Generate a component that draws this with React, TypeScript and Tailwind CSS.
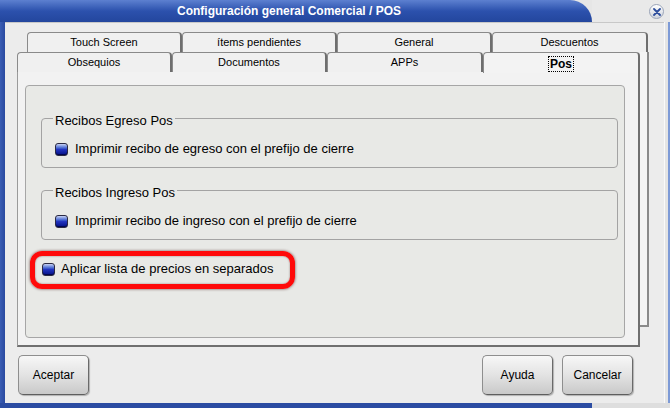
import React from "react";

const font = { fontFamily: '"Liberation Sans", Arial, sans-serif' };

const Check = () => (
  <span className="inline-block shrink-0 w-[13px] h-[13px] rounded-[3px] border border-[#2a2a44] bg-linear-to-b from-[#c9d2f2] via-[#2234c0] to-[#050f86] shadow-[inset_0_-1px_0_rgba(0,0,40,0.6)]" />
);

const Tab = ({ label, className }: { label: React.ReactNode; className: string }) => (
  <div
    className={
      "h-[20px] flex items-center justify-center border-l border-t border-r-2 border-[#8a8a8a] border-r-[#6e6e6e] rounded-t-[4px] text-[11px] text-black " +
      className
    }
  >
    {label}
  </div>
);

const Group = ({ title, label }: { title: string; label: string }) => (
  <div className="relative ml-[11px] w-[577px] h-[50px] border border-[#a3a3a3] rounded-[4px]">
    <span className="absolute left-[11px] -top-[6px] px-[2px] bg-[#e8e9e6] text-[13px] leading-[16px] text-black">
      {title}
    </span>
    <div className="flex items-center gap-[7px] pl-[13px] pt-[22px] text-[13px] leading-[16px] text-black">
      <Check />
      <span>{label}</span>
    </div>
  </div>
);

const Btn = ({ label }: { label: string }) => (
  <button className="w-[71px] h-[40px] rounded-[5px] border border-[#8e8e8e] border-b-[#5e5e5e] border-r-[#6a6a6a] bg-linear-to-b from-[#f7f7f7] via-[#e3e3e3] to-[#c9c9c9] shadow-[1px_1px_1px_rgba(0,0,0,0.25)] text-[12px] text-black">
    {label}
  </button>
);

export default function App() {
  return (
    <div className="w-[670px] h-[408px] flex flex-col overflow-hidden bg-[#e6e6e6]" style={font}>
      {/* title bar */}
      <div className="h-[22px] flex">
        <div className="w-[592px] h-[22px] rounded-tr-[34px] bg-linear-to-b from-[#5d80d0] via-[#2c51ad] to-[#23469d] flex items-center justify-center pr-[14px]">
          <span className="text-white font-bold text-[12px]">Configuración general Comercial / POS</span>
        </div>
        <div className="flex-1 flex items-start justify-end pr-[6px] pt-[4px] bg-[#e9e9e9]">
          <div className="w-[15px] h-[15px] rounded-full border border-[#9aa4b8] bg-linear-to-b from-[#ffffff] to-[#cfd4de] flex items-center justify-center">
            <svg width="8" height="8" viewBox="0 0 8 8">
              <path d="M1 1 L7 7 M7 1 L1 7" stroke="#2c4c9c" strokeWidth="1.8" strokeLinecap="round" />
            </svg>
          </div>
        </div>
      </div>

      <div className="flex h-[381px]">
        <div className="w-[5px] bg-linear-to-r from-[#3a5db4] to-[#2a4aa0]" />
        <div className="w-[659px] bg-[#ececec] border-t border-[#c8c8c8] flex flex-col pl-[12px] pt-[9px]">
          {/* tab control */}
          <div className="flex flex-col">
            <div className="flex ml-[10px]">
              <Tab label="Touch Screen" className="w-[155px] bg-[#f0f0f0]" />
              <Tab label="ítems pendientes" className="w-[155px] bg-[#f0f0f0]" />
              <Tab label="General" className="w-[155px] bg-[#f0f0f0]" />
              <Tab label="Descuentos" className="w-[156px] bg-[#f0f0f0]" />
            </div>
            <div className="flex">
              <div className="flex flex-col w-[623px]">
                <div className="flex">
                  <Tab label="Obsequios" className="w-[155px] bg-[#f0f0f0]" />
                  <Tab label="Documentos" className="w-[155px] bg-[#f0f0f0]" />
                  <Tab label="APPs" className="w-[156px] bg-[#f0f0f0]" />
                  <Tab
                    label={
                      <span className="border border-dotted border-black px-[1px] leading-[14px] font-bold text-[12px]">Pos</span>
                    }
                    className="w-[157px] bg-[#f3f3f3] relative z-10 -mb-px h-[21px] pt-[2px]"
                  />
                </div>
                <div className="w-[623px] h-[275px] border-l border-[#9a9a9a] border-r-2 border-r-[#707070] border-b-2 border-b-[#707070] bg-[#f2f2f2] pl-[7px] pt-[13px]">
                  <div className="w-[600px] h-[253px] border border-[#a6a6a6] rounded-[4px] bg-[#e8e9e6] pl-[4px] pt-[32px] flex flex-col">
                    <Group title="Recibos Egreso Pos" label="Imprimir recibo de egreso con el prefijo de cierre" />
                    <div className="h-[22px]" />
                    <Group title="Recibos Ingreso Pos" label="Imprimir recibo de ingreso con el prefijo de cierre" />
                    <div className="mt-[11px] w-[265px] h-[38px] border-[5px] border-[#ff0a0a] rounded-[12px] shadow-[0_0_3px_rgba(60,0,0,0.7),inset_0_0_2px_rgba(60,0,0,0.5)] flex items-center gap-[6px] pl-[7px] pb-[2px] text-[13px] text-black">
                      <Check />
                      <span>Aplicar lista de precios en separados</span>
                    </div>
                  </div>
                </div>
              </div>
              <div className="w-[9px] h-[275px] bg-[#f4f4f4] border-r-2 border-b-2 border-[#8a8a8a]" />
            </div>
          </div>

          {/* buttons */}
          <div className="mt-[8px] ml-[1px] w-[615px] flex justify-between">
            <Btn label="Aceptar" />
            <div className="flex gap-[9px]">
              <Btn label="Ayuda" />
              <Btn label="Cancelar" />
            </div>
          </div>
        </div>
        <div className="flex-1 bg-[#e4e4e4] border-l border-[#fafafa] border-r-2 border-r-[#7d9ad6]" />
      </div>

      <div className="h-[5px] flex">
        <div className="w-[592px] bg-[#2b4ca2]" />
        <div className="flex-1 bg-[#dedede]" />
      </div>
    </div>
  );
}
